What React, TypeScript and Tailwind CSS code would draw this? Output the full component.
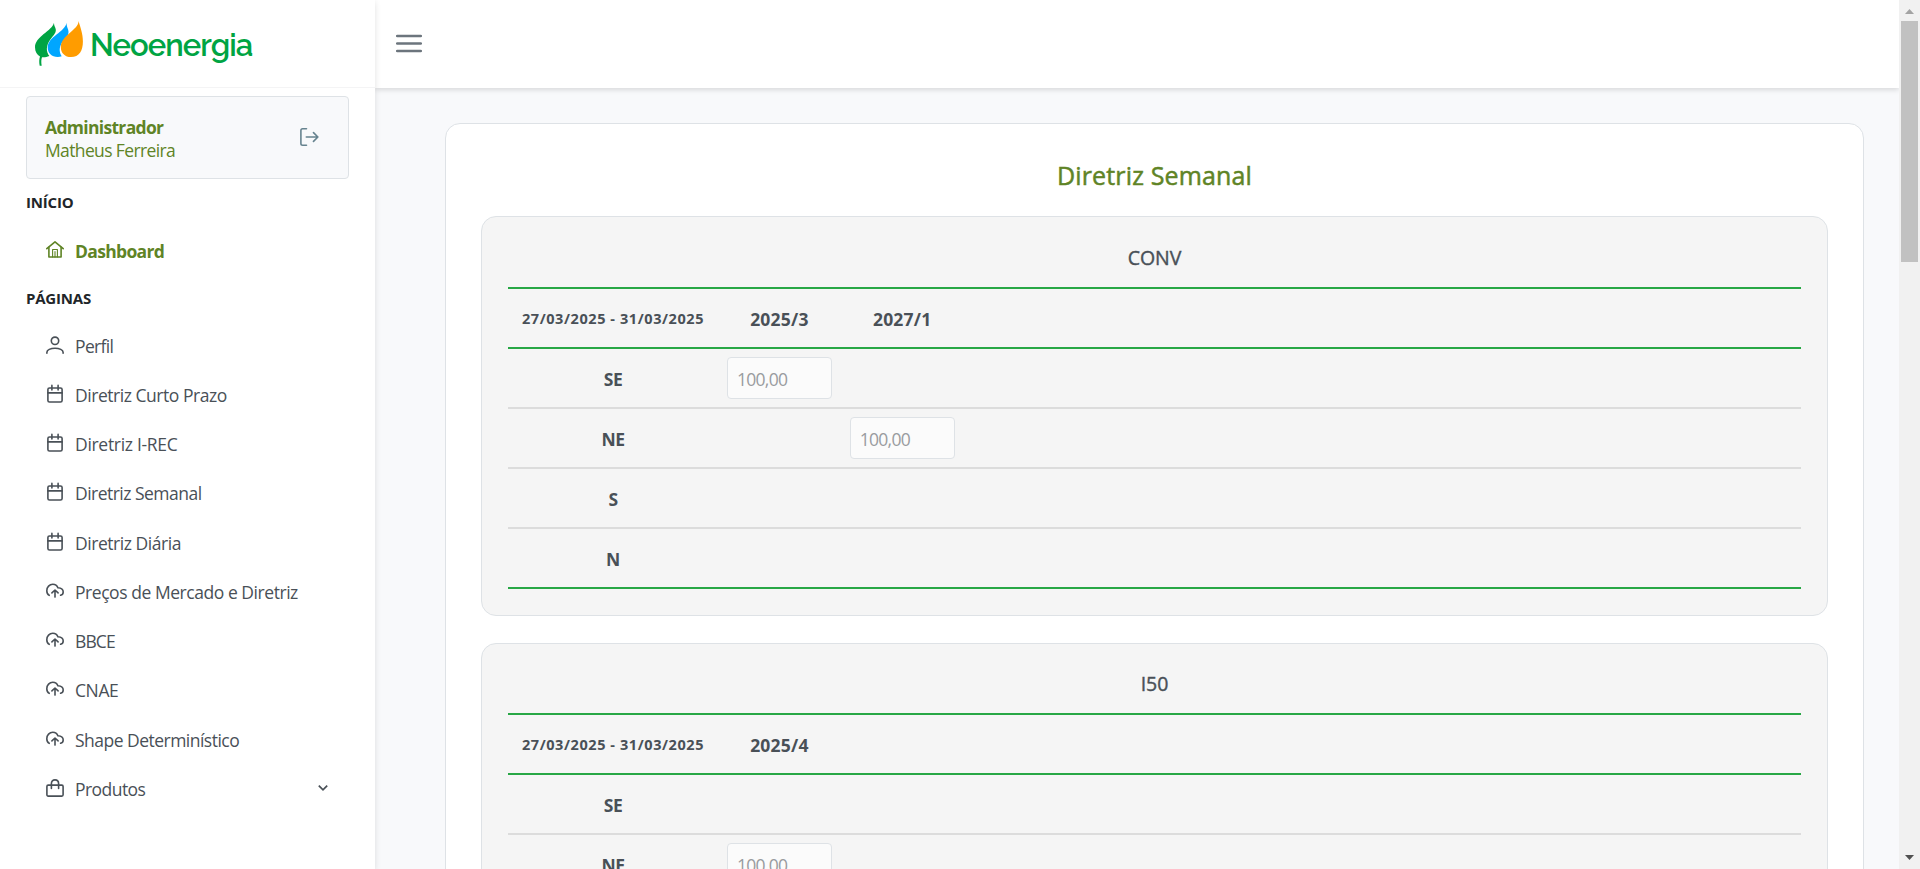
import React from "react";

type IconName = "home" | "user" | "calendar" | "upload" | "bag";

const shapes: Record<IconName, React.ReactNode> = {
  home: (
    <>
      <path d="M.8 7.700 9 .8l8.200 6.900" />
      <path d="M2.900 6.300v9.700h12.200V6.300" />
      <path d="M6.600 16V8.500h4.800V16M9 10.500V16" strokeWidth="1.1" />
    </>
  ),
  user: (
    <>
      <circle cx="9" cy="4.800" r="3.700" />
      <path d="M.9 17.200v-.9c0-2.400 3.600-4.100 8.100-4.100s8.100 1.700 8.100 4.100v.9" />
    </>
  ),
  calendar: (
    <>
      <rect x="1.900" y="3" width="14.200" height="14" rx="1.600" />
      <path d="M1.900 7.900h14.200M5.900.4v4.600M12.100.4v4.600" />
    </>
  ),
  upload: (
    <>
      <path d="M3.200 13.300C1.700 12.600.8 11 .8 8.700c0-3.600 2.700-6.400 6-6.400 2.600 0 4.300 1.300 5.100 3.500 3.100.2 5.300 1.500 5.300 4.200 0 1.700-1 2.900-2.600 3.300" />
      <path d="M9 15.100V8.300M5.900 10.900 9 8l3.100 2.900" />
    </>
  ),
  bag: (
    <>
      <rect x=".9" y="6.100" width="16.200" height="11" rx="1.300" />
      <path d="M5.400 9.400V4.600C5.400 2.400 6.800.9 9 .9s3.600 1.500 3.600 3.700v4.800" />
    </>
  ),
};

function Icon({ name }: { name: IconName }) {
  return (
    <svg
      viewBox="0 0 18 18"
      className="mb-1 mr-[11px] h-[18px] w-[18px] shrink-0 overflow-visible"
      fill="none"
      stroke="currentColor"
      strokeWidth="1.600"
      strokeLinecap="round"
      strokeLinejoin="round"
    >
      {shapes[name]}
    </svg>
  );
}

const pages: { label: string; icon: IconName; track: string }[] = [
  { label: "Perfil", icon: "user", track: "tracking-[-0.65px]" },
  { label: "Diretriz Curto Prazo", icon: "calendar", track: "tracking-[-0.46px]" },
  { label: "Diretriz I-REC", icon: "calendar", track: "tracking-[-0.3px]" },
  { label: "Diretriz Semanal", icon: "calendar", track: "tracking-[-0.52px]" },
  { label: "Diretriz Diária", icon: "calendar", track: "tracking-[-0.45px]" },
  { label: "Preços de Mercado e Diretriz", icon: "upload", track: "tracking-[-0.45px]" },
  { label: "BBCE", icon: "upload", track: "tracking-[-0.9px]" },
  { label: "CNAE", icon: "upload", track: "tracking-[-0.4px]" },
  { label: "Shape Determinístico", icon: "upload", track: "tracking-[-0.52px]" },
  { label: "Produtos", icon: "bag", track: "tracking-[-0.55px]" },
];

function Logo() {
  return (
    <div className="flex h-[88px] shrink-0 items-start border-b border-[#f4f4f5] pl-[34px] pt-5">
      <svg viewBox="34 20 50 48" className="h-12 w-[50px] shrink-0">
        <path
          fill="#00a443"
          d="M54 22.700C52 31 35 36.500 35 47.200c0 4.500 2.200 7.700 5 9.300-.9 2.700-1 5.700-.3 9.200h2c-.6-3.600-.5-6.200.3-8.500 2.200.3 4.600 0 7.300-1.200-3.500-4.500-3.300-11 1.200-16.800 3-4 6.900-7 4.700-11.700-.8-1.700-1.200-3-1.200-4.800z"
        />
        <path
          fill="#00a6ff"
          d="M66.600 22.700C65 32 47.700 36.500 47.700 47.500c0 5.500 4 9.500 10 9.500 1.600 0 2.900-.3 4-.8-3-4.500-2.600-10 1.200-14.700 2.700-3.500 7-6.500 5.200-12-.9-2.500-1.600-4.300-1.500-6.800z"
        />
        <path
          fill="#ff9c00"
          d="M78.500 21c.3 9-17.700 14-17.700 26.200 0 5.700 4.200 9.900 10.200 9.900 8.300 0 11.900-6.600 11.900-15.600 0-8-2.500-14-4.400-20.500z"
        />
      </svg>
      <span className="ml-[6px] mt-[4px] font-[Raleway,Lato,sans-serif] text-[31px] font-semibold leading-[42px] tracking-[-0.95px] text-[#00a443]">
        Neoenergia
      </span>
    </div>
  );
}

function Sidebar() {
  return (
    <aside className="z-10 flex h-[869px] w-[375px] shrink-0 flex-col bg-white shadow-[0_2px_6px_rgba(0,0,0,0.12)]">
      <Logo />
      <div className="mx-[26px] mt-[8px] flex h-[83px] shrink-0 items-center justify-between rounded-[4px] border border-[#dee2e6] bg-[#f8f9fb] pl-[18px] pr-[29px]">
        <div className="pt-[2px] text-[17.500px] leading-[23px] text-[#5f8426]">
          <div className="font-bold tracking-[-0.68px]">Administrador</div>
          <div className="tracking-[-0.63px]">Matheus Ferreira</div>
        </div>
        <svg viewBox="0 0 19 18" className="mb-[2px] h-[18px] w-[19px] text-[#66838f]" fill="none" stroke="currentColor" strokeWidth="1.600" strokeLinecap="round" strokeLinejoin="round">
          <path d="M6.500.8H2.600c-1 0-1.700.7-1.700 1.700v13c0 1 .7 1.700 1.700 1.700h3.900M6.300 9h11.600M13.500 4.600 17.900 9l-4.400 4.400" />
        </svg>
      </div>
      <div className="ml-[26px] mt-[12px] h-[23px] text-[15px] font-bold leading-[22px] tracking-[-0.2px] text-[#212529]">INÍCIO</div>
      <div className="ml-[46px] mt-[13px] flex h-[49px] items-center text-[17.500px] font-bold tracking-[-0.67px] text-[#5f8426]">
        <Icon name="home" />
        Dashboard
      </div>
      <div className="ml-[26px] mt-[11px] h-[23px] text-[15px] font-bold leading-[22px] tracking-[-0.2px] text-[#212529]">PÁGINAS</div>
      <nav className="mt-[12px]">
        {pages.map((p) => (
          <div key={p.label} className="ml-[46px] mr-[47px] flex h-[49.280px] items-center text-[17.500px] text-[#495057]">
            <Icon name={p.icon} />
            <span className={`pb-[2px] ${p.track}`}>{p.label}</span>
            {p.icon === "bag" && (
              <svg viewBox="0 0 10 6" className="mb-1 ml-auto h-[6px] w-[10px] overflow-visible" fill="none" stroke="currentColor" strokeWidth="1.700">
                <path d="M.8.7 5 4.900 9.200.7" />
              </svg>
            )}
          </div>
        ))}
      </nav>
    </aside>
  );
}

interface Guideline {
  title: string;
  columns: string[];
  values: Record<string, (string | null)[]>;
}

const regions = ["SE", "NE", "S", "N"];

const guidelines: Guideline[] = [
  { title: "CONV", columns: ["2025/3", "2027/1"], values: { SE: ["100,00", null], NE: [null, "100,00"] } },
  { title: "I50", columns: ["2025/4"], values: { NE: ["100,00"] } },
];

const rowBorder = (last: boolean) => (last ? "border-[#28a745]" : "border-[#dcdcdc]");

function GuidelineCard({ data, first }: { data: Guideline; first: boolean }) {
  return (
    <section className={`${first ? "h-[400px]" : "mt-[27px] h-[399px]"} shrink-0 rounded-[15px] border border-[#dee2e6] bg-[#f5f5f5] px-[26px]`}>
      <h2 className={`${first ? "h-[70px] pt-[25px]" : "h-[69px] pt-[24px]"} text-center text-[19.500px] leading-[32px] tracking-[-0.1px] [-webkit-text-stroke:0.4px_currentColor]`}>
        {data.title}
      </h2>
      <div className="flex h-[62px] items-center border-y-2 border-[#28a745] font-bold">
        <div className="w-[210px] pt-[2px] text-center text-[14.500px] tracking-[0.58px]">27/03/2025 - 31/03/2025</div>
        {data.columns.map((c) => (
          <div key={c} className="w-[122.800px] pt-[2px] text-center text-[17.500px] tracking-[0.2px]">{c}</div>
        ))}
      </div>
      {regions.map((r, i) => (
        <div key={r} className={`flex h-[60px] items-center border-b-2 ${rowBorder(i === regions.length - 1)}`}>
          <div className="w-[210px] pt-[2px] text-center text-[17.500px] font-bold tracking-[-0.4px]">{r}</div>
          {(data.values[r] ?? []).map((v, k) => (
            <div key={k} className="flex w-[122.800px] justify-center">
              {v && (
                <div className="h-[42px] w-[105px] rounded-[4px] border border-[#dee2e6] bg-[#fbfbfb] pl-[9px] text-[17.500px] leading-[42px] tracking-[-0.7px] text-[#999c9f]">
                  {v}
                </div>
              )}
            </div>
          ))}
        </div>
      ))}
    </section>
  );
}

function Scrollbar() {
  return (
    <div className="flex h-[869px] w-[21px] shrink-0 flex-col items-center bg-[#f1f1f1]">
      <svg viewBox="0 0 9 5" className="mt-[9px] h-[5px] w-[9px]">
        <path d="M4.500 0 9 5H0z" fill="#a3a3a3" />
      </svg>
      <div className="mt-[7px] h-[241px] w-[17px] bg-[#c1c1c1]" />
      <svg viewBox="0 0 9 5" className="mb-[9px] mt-auto h-[5px] w-[9px]">
        <path d="M0 0h9L4.500 5z" fill="#505050" />
      </svg>
    </div>
  );
}

export default function App() {
  return (
    <div className="flex h-[869px] w-[1920px] overflow-hidden bg-[#f8f9fb] font-['Open_Sans','Noto_Sans',sans-serif] text-[#495057]">
      <Sidebar />
      <div className="flex h-[869px] w-[1524px] shrink-0 flex-col overflow-hidden">
        <header className="flex h-[88px] shrink-0 items-start bg-white pl-[21px] pt-[34px] shadow-[0_2px_5px_rgba(0,0,0,0.13)]">
          <svg viewBox="0 0 26 20" className="h-5 w-[26px]" stroke="#6c757d" strokeWidth="2.500" strokeLinecap="round">
            <path d="M1.200 2h23.600M1.200 9.500h23.600M1.200 17h23.600" />
          </svg>
        </header>
        <main className="ml-[70px] mt-[35px] w-[1419px] shrink-0 rounded-[15px] border border-[#dee2e6] bg-white px-[35px]">
          <h1 className="h-[92px] pt-[31px] text-center text-[25px] leading-[40px] tracking-[0.15px] text-[#5f8426] [-webkit-text-stroke:0.5px_currentColor]">Diretriz Semanal</h1>
          {guidelines.map((g, i) => (
            <GuidelineCard key={g.title} data={g} first={i === 0} />
          ))}
        </main>
      </div>
      <Scrollbar />
    </div>
  );
}
